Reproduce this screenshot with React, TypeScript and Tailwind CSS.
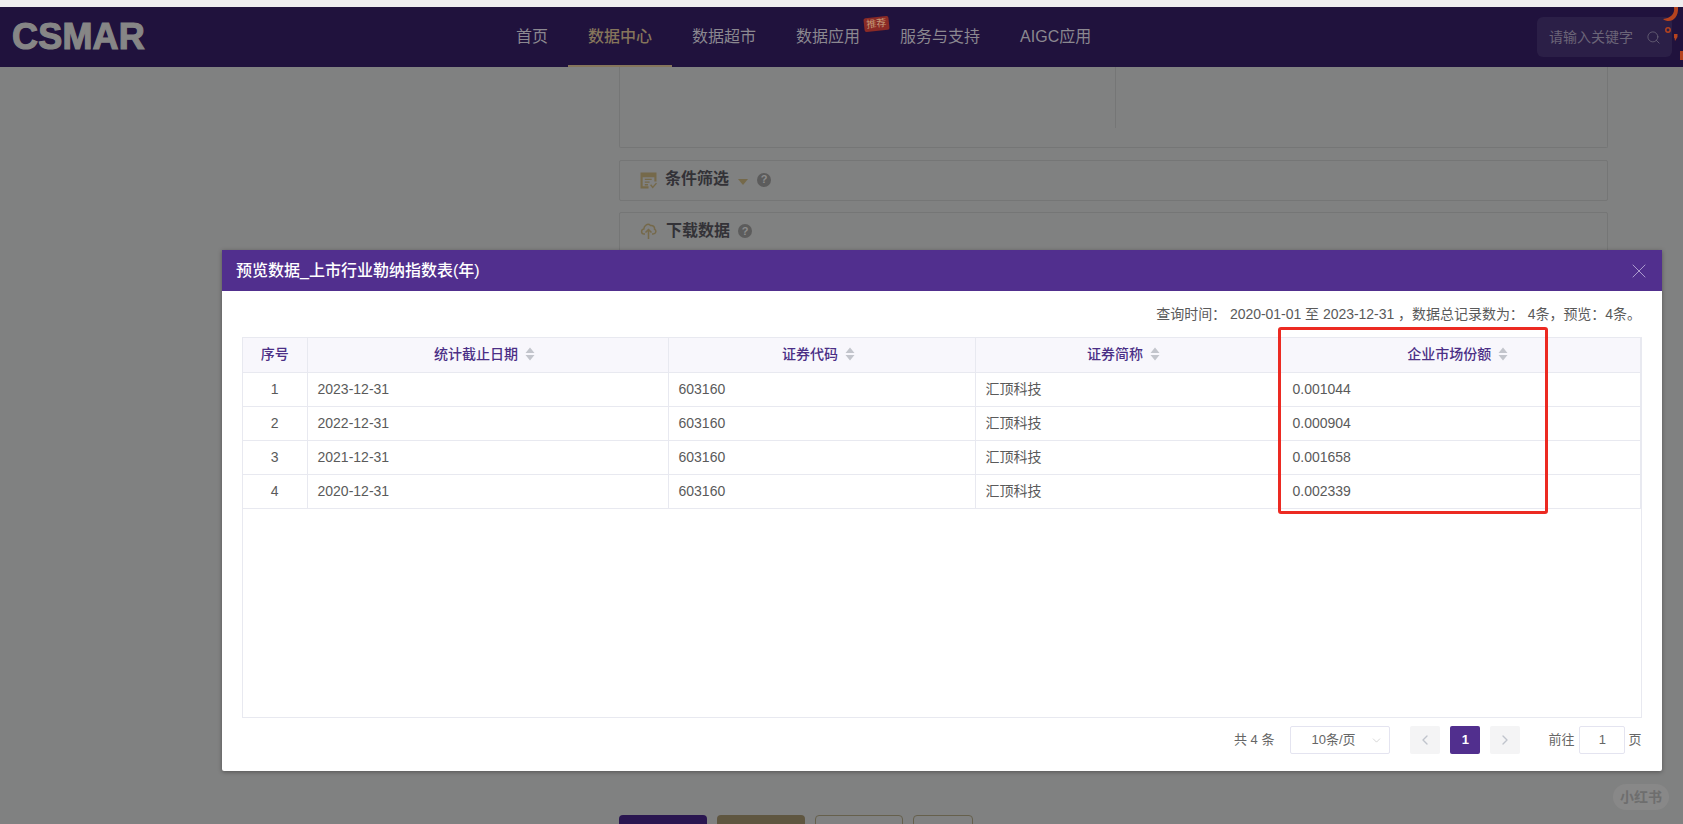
import { ChevronDown, ChevronLeft, ChevronRight, Search, X } from "lucide-react";

const rows = [
  ["1", "2023-12-31", "603160", "汇顶科技", "0.001044"],
  ["2", "2022-12-31", "603160", "汇顶科技", "0.000904"],
  ["3", "2021-12-31", "603160", "汇顶科技", "0.001658"],
  ["4", "2020-12-31", "603160", "汇顶科技", "0.002339"],
];

function Sort() {
  return (
    <svg width="10" height="14" viewBox="0 0 10 14" className="inline-block ml-[7px] align-[-2px]">
      <path d="M5 0.5 L9.5 6 H0.5 Z M5 13.5 L0.5 8 H9.5 Z" fill="#c3c5cc" />
    </svg>
  );
}

function Help() {
  return (
    <span className="flex h-[14px] w-[14px] items-center justify-center rounded-full bg-[#5c5c5c] text-[11px] font-bold leading-none text-[#8d8d8d]">?</span>
  );
}

function NavItem({ label, active }: { label: string; active?: boolean }) {
  return (
    <div className={active ? "flex h-[60px] items-center border-b-2 border-[#85755b] px-[20px] pt-[2px] text-[16px] font-medium text-[#85755b]" : "flex h-[60px] items-center border-b-2 border-transparent px-[20px] pt-[2px] text-[16px] text-[#8b8890]"}>
      {label}
    </div>
  );
}

function Th({ label }: { label: string }) {
  return (
    <th className="h-[34px] border-r border-b border-[#e8e9f0] bg-[#f8f7fc] pr-[6px] text-center text-[14px] font-medium text-[#4b2f86]">
      {label}
      <Sort />
    </th>
  );
}

export default function App() {
  return (
    <div className="relative h-screen w-full overflow-hidden bg-[#808181] font-['Liberation_Sans','Noto_Sans_CJK_SC',sans-serif]">
      <div className="h-[7px] bg-[#efeeef]" />
      <header className="relative flex h-[60px] items-center bg-[#20123d]">
        <div className="ml-[12px] w-[135px] text-[36px] font-bold leading-none tracking-[0.2px] text-[#868686] [-webkit-text-stroke:1.2px_#868686]">CSMAR</div>
        <nav className="relative ml-[349px] flex">
          <NavItem label="首页" />
          <NavItem label="数据中心" active />
          <NavItem label="数据超市" />
          <NavItem label="数据应用" />
          <NavItem label="服务与支持" />
          <NavItem label="AIGC应用" />
          <span className="absolute left-[368px] top-[10px] flex h-[14px] w-[25px] -rotate-6 items-center justify-center rounded-[2px] bg-[#8a2a26] text-[10px] leading-none text-[#c49a78]">推荐</span>
        </nav>
        <div className="ml-auto mr-[11px] flex h-[40px] w-[135px] items-center rounded-[6px] bg-[#2b1f47] pl-[12px] pr-[11px]">
          <span className="text-[14px] text-[#6b6578]">请输入关键字</span>
          <Search size={15} strokeWidth={1.2} className="ml-auto text-[#6f6a7c]" />
        </div>
        <svg width="24" height="60" viewBox="0 0 24 60" className="absolute right-0 top-0">
          <path d="M15 0 C16 7 12 11 4 12 C10 17 20 13 19 0 Z" fill="#b5431f" />
          <circle cx="9" cy="23" r="2.2" fill="none" stroke="#b5431f" strokeWidth="1.5" />
          <path d="M15 27 h3.5 v3 l-2.5 4 l-0.5 -3 h-0.5 Z" fill="#b5431f" />
          <path d="M21 44 h3 v9 h-3 Z" fill="#b5431f" />
        </svg>
      </header>

      <main className="ml-[619px] w-[989px]">
        <div className="h-[81px] rounded-b-[2px] border-x border-b border-[#757676]">
          <div className="ml-[495px] h-[61px] w-px bg-[#757676]" />
        </div>
        <div className="mt-[12px] flex h-[41px] items-center rounded-[2px] border border-[#757676] pl-[20px]">
          <svg width="17" height="17" viewBox="0 0 16 16">
            <path d="M0.5 0.5 H15.5 V9 H13.5 V5 H2.5 V13.5 H8 V15.5 H0.5 Z" fill="#75694a" />
            <path d="M4.5 7 H11 M4.5 9.5 H9 M4.5 12 H7.5" stroke="#75694a" strokeWidth="1.2" />
            <path d="M10 12 L12 14.5 L15.5 10.5" fill="none" stroke="#75694a" strokeWidth="1.3" />
          </svg>
          <span className="mb-[3px] ml-[8px] text-[16px] font-bold text-[#333237]">条件筛选</span>
          <span className="ml-[9px] mt-[2px] h-0 w-0 border-x-[5px] border-t-[6px] border-x-transparent border-t-[#75694a]" />
          <span className="mb-[2px] ml-[9px]"><Help /></span>
        </div>
        <div className="mt-[11px] h-[500px] rounded-[2px] border border-[#757676] pl-[20px] pt-[8px]">
          <div className="flex h-[20px] items-center">
            <svg width="17" height="18" viewBox="0 0 17 18" fill="none" stroke="#75694a" strokeWidth="1.5">
              <path d="M5 12 H4 C1 12 0.8 7.5 3.8 7 C4 3 8 1 10.5 3.5 C13 3 15 5 14.5 7.2 C16.8 8.5 16 12 13 12 H12" />
              <path d="M8.5 17 V8 M5.5 10.5 L8.5 7.5 L11.5 10.5" />
            </svg>
            <span className="ml-[9px] text-[16px] font-bold text-[#333237]">下载数据</span>
            <span className="ml-[8px]"><Help /></span>
          </div>
        </div>
        <div className="mt-[103px] flex gap-[10px]">
          <div className="h-[40px] w-[88px] rounded-[4px] bg-[#2a1650]" />
          <div className="h-[40px] w-[88px] rounded-[4px] bg-[#5f5640]" />
          <div className="h-[40px] w-[88px] rounded-[4px] border border-[#66604c]" />
          <div className="h-[40px] w-[60px] rounded-[4px] border border-[#66604c]" />
        </div>
      </main>

      <section className="absolute left-[222px] top-[250px] flex h-[521px] w-[1440px] flex-col rounded-b-[2px] bg-white shadow-[0_1px_4px_rgba(0,0,0,0.35)]">
        <div className="flex h-[41px] items-center bg-[#512f8e] pl-[14px] pr-[11px]">
          <span className="text-[16px] font-medium text-white">预览数据_上市行业勒纳指数表(年)</span>
          <X size={24} strokeWidth={0.9} className="ml-auto text-[#b7a8d6]" />
        </div>
        <div className="flex h-[46px] items-center justify-end pr-[21px] text-[14px] tracking-[-0.03px] text-[#5a5a5a]">
          查询时间： 2020-01-01 至 2023-12-31 ，数据总记录数为： 4条，预览：4条。
        </div>
        <div className="mx-[20px] h-[381px] w-[1400px] border-x border-y border-[#e8e9f0]">
          <table className="w-full table-fixed border-collapse">
            <colgroup>
              <col className="w-[64px]" />
              <col className="w-[361px]" />
              <col className="w-[307px]" />
              <col className="w-[303px]" />
              <col />
            </colgroup>
            <thead>
              <tr>
                <th className="h-[34px] border-r border-b border-[#e8e9f0] bg-[#f8f7fc] text-center text-[14px] font-medium text-[#4b2f86]">序号</th>
                <Th label="统计截止日期" />
                <Th label="证券代码" />
                <Th label="证券简称" />
                <th className="h-[34px] border-r border-b border-[#e8e9f0] bg-[#f8f7fc] pl-[3px] pr-[6px] text-center text-[14px] font-medium text-[#4b2f86]">
                  企业市场份额
                  <Sort />
                </th>
              </tr>
            </thead>
            <tbody>
              {rows.map((r) => (
                <tr key={r[0]}>
                  {r.map((c, i) => (
                    <td
                      key={i}
                      className={
                        i === 0
                          ? "h-[34px] border-r border-b border-[#e8e9f0] text-center text-[14px] text-[#5a5a5a]"
                          : i === 4
                            ? "h-[34px] border-r border-b border-[#e8e9f0] pl-[14px] text-[14px] text-[#5a5a5a]"
                            : "h-[34px] border-r border-b border-[#e8e9f0] pl-[10px] text-[14px] text-[#5a5a5a]"
                      }
                    >
                      {c}
                    </td>
                  ))}
                </tr>
              ))}
            </tbody>
          </table>
        </div>
        <div className="mt-[8px] flex h-[28px] items-center text-[13px] text-[#666]">
          <span className="ml-[1012px]">共 4 条</span>
          <div className="ml-[16px] flex h-[28px] w-[100px] items-center rounded-[2px] border border-[#e4e4f0] pl-[20px] pr-[6px] text-[#666]">
            10条/页
            <ChevronDown size={13} strokeWidth={1} className="ml-auto text-[#b5b5b5]" />
          </div>
          <div className="ml-[20px] flex h-[28px] w-[30px] items-center justify-center rounded-[2px] bg-[#f4f4f5] text-[#c0c4cc]"><ChevronLeft size={16} strokeWidth={2} /></div>
          <div className="ml-[10px] flex h-[28px] w-[30px] items-center justify-center rounded-[2px] bg-[#512f8e] font-bold text-white">1</div>
          <div className="ml-[10px] flex h-[28px] w-[30px] items-center justify-center rounded-[2px] bg-[#f4f4f5] text-[#c0c4cc]"><ChevronRight size={16} strokeWidth={2} /></div>
          <span className="ml-[28px]">前往</span>
          <div className="ml-[5px] flex h-[28px] w-[46px] items-center justify-center rounded-[2px] border border-[#e4e4f0]">1</div>
          <span className="ml-[3px]">页</span>
        </div>
        <div className="absolute left-[1056px] top-[77px] h-[187px] w-[270px] rounded-[3px] border-[3px] border-[#ec2a22]" />
      </section>

      <div className="absolute left-[1613px] top-[784px] flex h-[26px] w-[56px] items-center justify-center rounded-full bg-[#888888] text-[14px] font-bold text-[#6e6e6e]">小红书</div>
    </div>
  );
}
